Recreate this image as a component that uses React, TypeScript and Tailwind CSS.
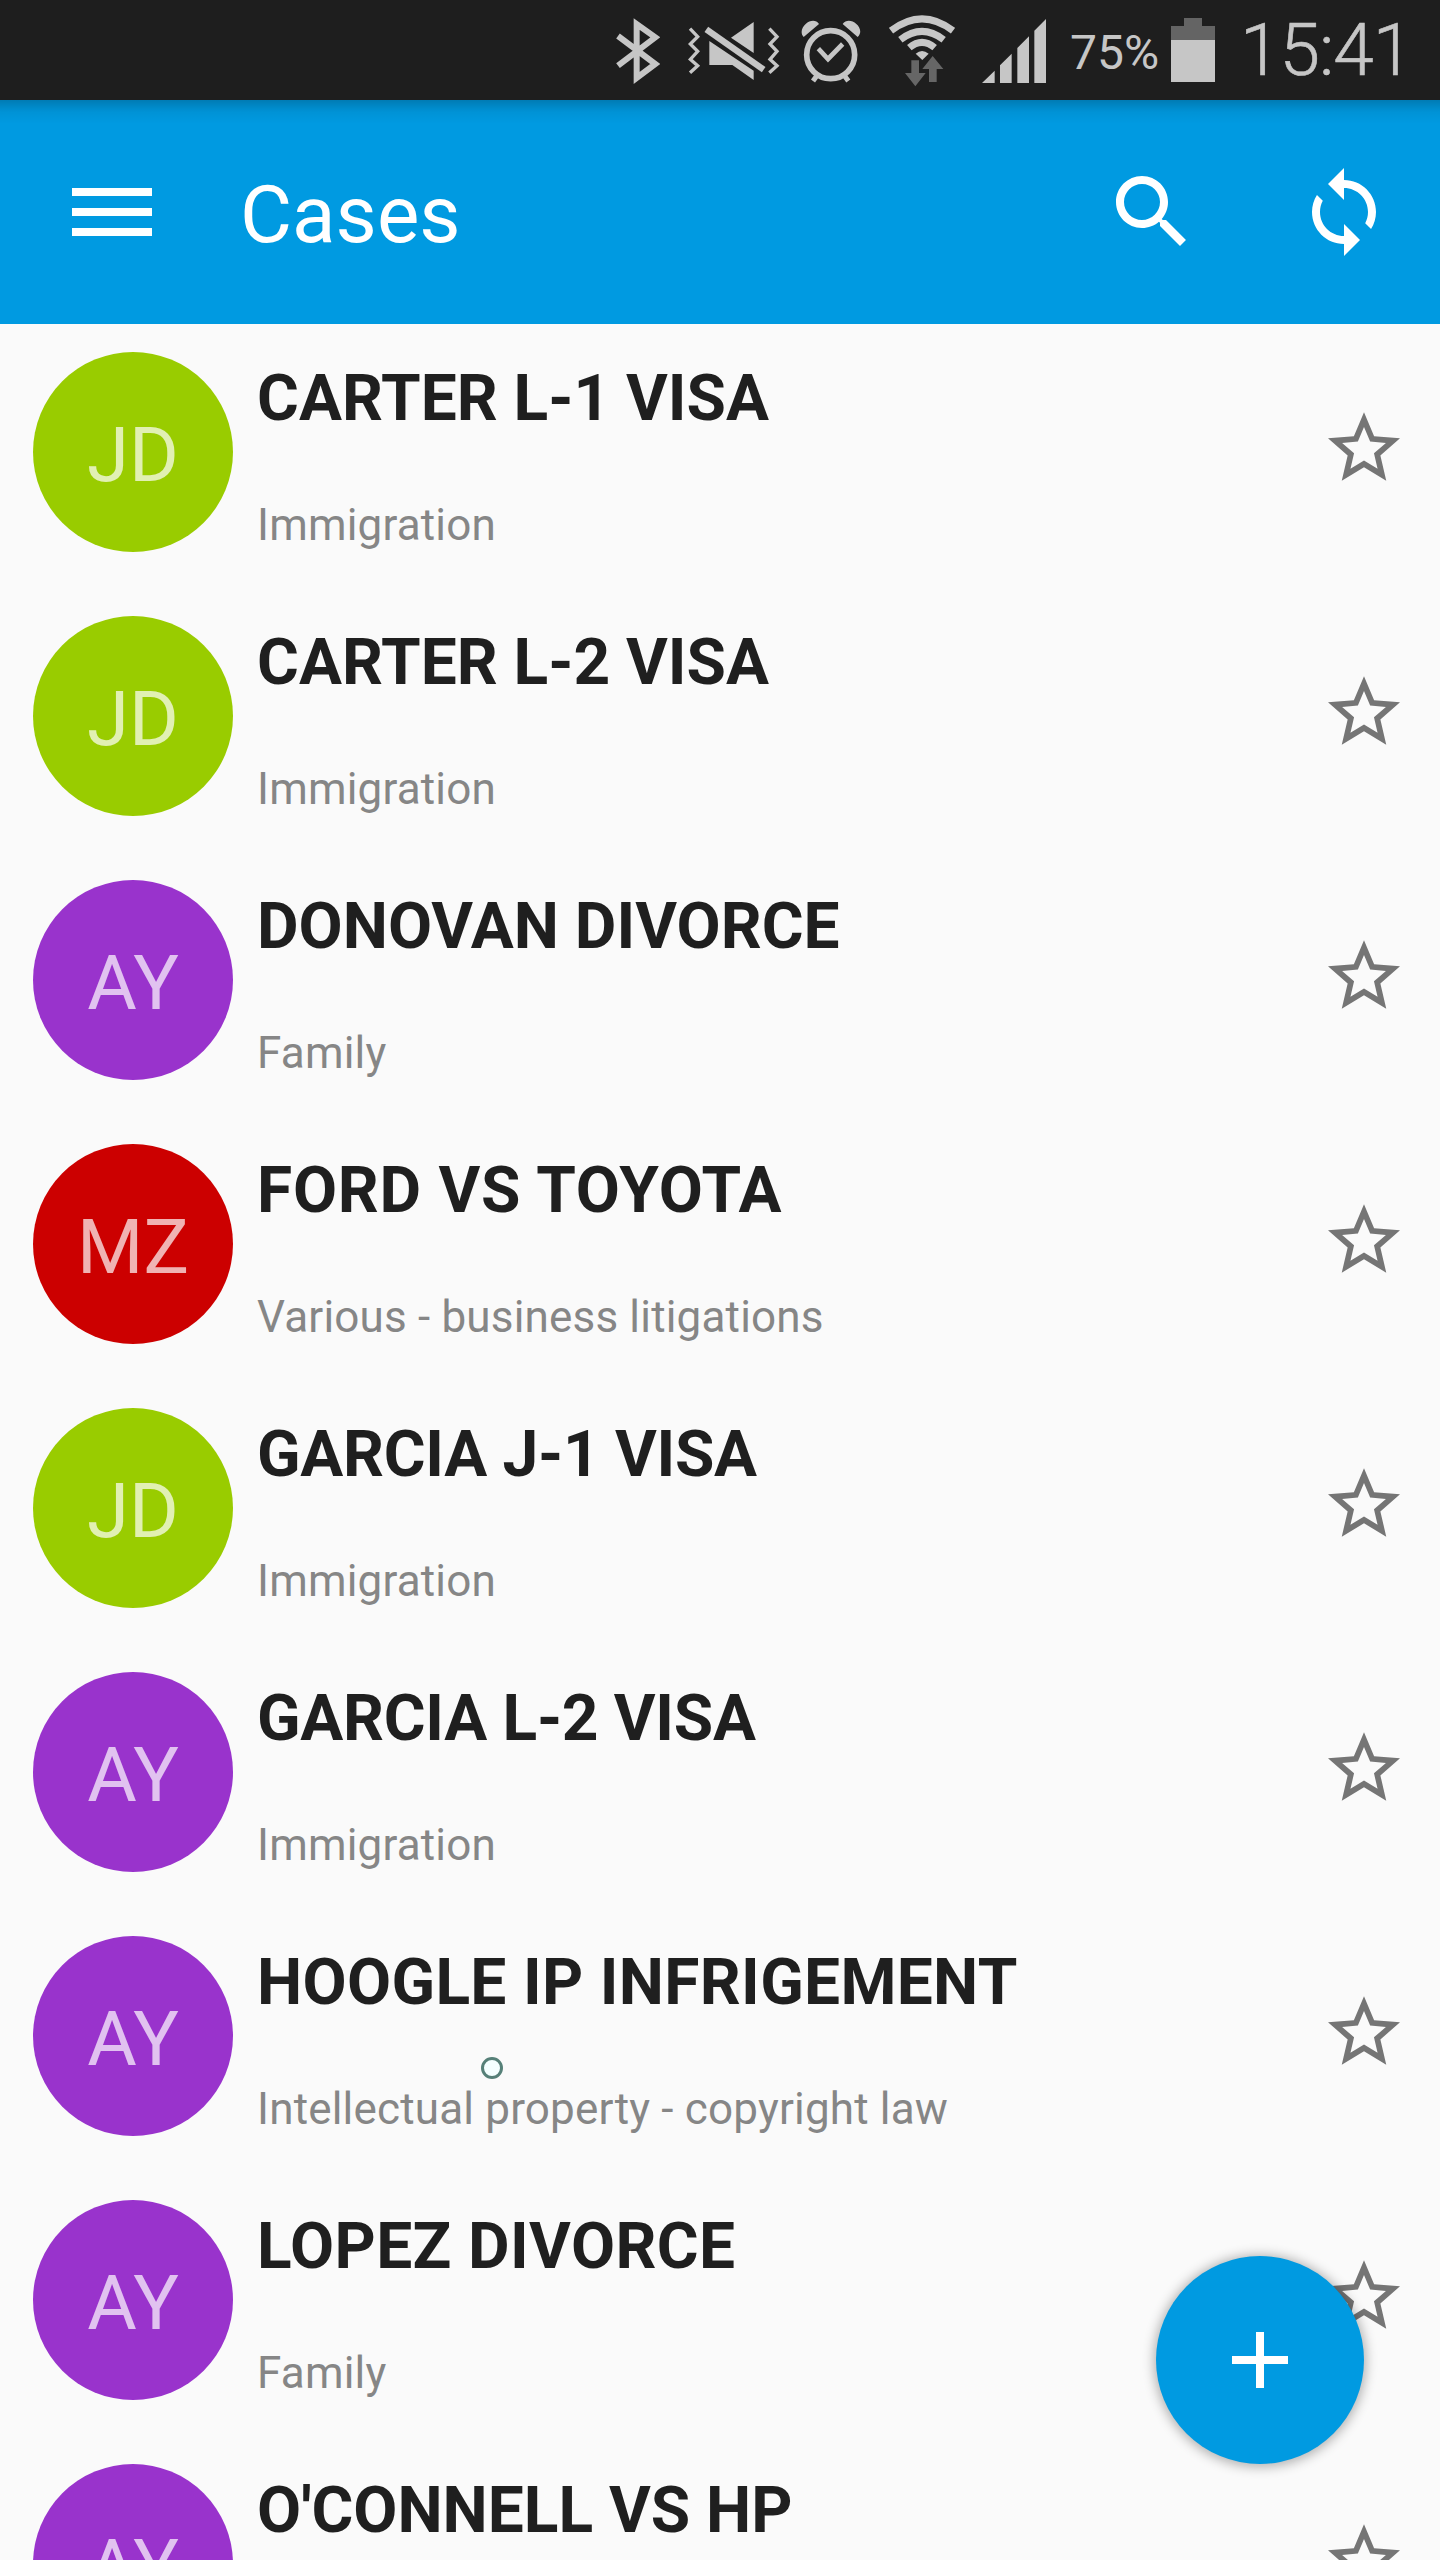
import clsx from 'clsx';

type Case = {
  initials: string;
  color: string;
  title: string;
  area: string;
  tracking?: string;
};

const cases: Case[] = [
  { initials: 'JD', color: 'bg-[#99cc00]', title: 'CARTER L-1 VISA', area: 'Immigration' },
  { initials: 'JD', color: 'bg-[#99cc00]', title: 'CARTER L-2 VISA', area: 'Immigration' },
  { initials: 'AY', color: 'bg-[#9933cc]', title: 'DONOVAN DIVORCE', area: 'Family' },
  { initials: 'MZ', color: 'bg-[#cc0000]', title: 'FORD VS TOYOTA', area: 'Various - business litigations', tracking: 'tracking-[0.75px]' },
  { initials: 'JD', color: 'bg-[#99cc00]', title: 'GARCIA J-1 VISA', area: 'Immigration', tracking: 'tracking-[-0.3px]' },
  { initials: 'AY', color: 'bg-[#9933cc]', title: 'GARCIA L-2 VISA', area: 'Immigration', tracking: 'tracking-[-0.3px]' },
  { initials: 'AY', color: 'bg-[#9933cc]', title: 'HOOGLE IP INFRIGEMENT', area: 'Intellectual property - copyright law', tracking: 'tracking-[0.33px]' },
  { initials: 'AY', color: 'bg-[#9933cc]', title: 'LOPEZ DIVORCE', area: 'Family', tracking: 'tracking-[0.38px]' },
  { initials: 'AY', color: 'bg-[#9933cc]', title: "O'CONNELL VS HP", area: '' },
];

function StatusBar() {
  return (
    <div className="h-[100px] bg-[#1e1e1e] flex items-start text-[#c6c6c6] pl-[616px] shrink-0 whitespace-nowrap">
      {/* bluetooth */}
      <svg className="w-[44px] h-[100px] shrink-0" viewBox="48 0 132 300" fill="none" stroke="currentColor" strokeWidth="18">
        <path d="M54 108L166 192L110 234V72L166 112L54 197" />
      </svg>

      {/* muted, vibrating */}
      <svg className="ml-[28px] w-[92px] h-[100px] shrink-0" viewBox="264 0 276 300" fill="currentColor">
        <path d="M270 86L293 110L271 132L293 154L271 178L293 197L270 218M508 86L531 110L510 132L531 154L510 178L531 197L508 218" fill="none" stroke="currentColor" strokeWidth="10" />
        <path d="M461 66V159L393 113ZM328 123L461 212V240L397 195H328Z" />
        <path d="M319 88L491 209" stroke="currentColor" strokeWidth="19" />
      </svg>

      {/* alarm */}
      <svg className="ml-[21px] w-[60px] h-[100px] shrink-0" viewBox="603 0 180 300" fill="none" stroke="currentColor">
        <circle cx="692" cy="164" r="72" strokeWidth="17" />
        <path d="M655 146L684 177L728 132" strokeWidth="14" />
        <path d="M650 228L639 243M734 228L745 243" strokeWidth="15" />
        <path d="M611 111C600 100 605 82 617 72C630 60 648 58 657 72ZM773 111C786 100 781 82 769 72C756 60 738 58 728 72Z" fill="currentColor" stroke="none" />
      </svg>

      {/* wifi with traffic arrows */}
      <svg className="ml-[28px] w-[66px] h-[100px] shrink-0" viewBox="867 0 198 300">
        <g fill="none" stroke="currentColor" strokeWidth="21">
          <path d="M873 92Q966 21 1059 92" />
          <path d="M901 119Q966 69 1031 119" />
          <path d="M928 143Q966 111 1004 143" />
        </g>
        <path d="M947 161Q966 145 986 161L967 180Z" fill="currentColor" />
        <path d="M934 181H957V219H977L946 259L915 219H934ZM987 246V207H967L998 168L1030 207H1010V246Z" fill="#666" />
      </svg>

      {/* signal */}
      <svg className="ml-[27px] w-[65px] h-[100px] shrink-0" viewBox="66 0 195 300" fill="currentColor">
        <path d="M66 249L104 212V249ZM120 249V196L155 161V249ZM172 249V144L207 109V249ZM223 249V92L258 57V249Z" />
      </svg>

      <span className="ml-[23px] w-[90px] pt-[21px] text-[48px] leading-[64px]">75%</span>

      {/* battery */}
      <svg className="ml-[11px] w-[44px] h-[100px] shrink-0" viewBox="633 0 132 300">
        <path d="M672 54H726V78H765V120H633V78H672Z" fill="#646464" />
        <path d="M633 120H765V246H633Z" fill="currentColor" />
      </svg>

      <span className="ml-[25px] pt-[10px] text-[73px] leading-[80px] font-light tracking-[-1px] [-webkit-text-stroke:0.6px]">15:41</span>
    </div>
  );
}

function AppBar() {
  return (
    <header className="relative h-[224px] bg-[#009ae1] flex items-center text-white shrink-0">
      <div className="absolute inset-x-0 top-0 h-[24px] bg-linear-to-b from-black/20 via-black/5 to-transparent" />
      <div className="ml-[72px] w-[80px] flex flex-col gap-[12px]">
        <span className="h-[8px] bg-white" />
        <span className="h-[8px] bg-white" />
        <span className="h-[8px] bg-white" />
      </div>
      <h1 className="ml-[88px] mt-[6px] text-[80px] leading-[96px] font-normal">Cases</h1>
      <svg className="ml-auto w-[96px] h-[96px]" viewBox="0 0 24 24" fill="currentColor">
        <path d="M15.5 14h-.79l-.28-.27C15.41 12.59 16 11.11 16 9.5 16 5.91 13.09 3 9.5 3S3 5.91 3 9.5 5.91 16 9.5 16c1.61 0 3.09-.59 4.23-1.57l.27.28v.79l5 4.99L20.49 19l-4.99-5zm-6 0C7.01 14 5 11.99 5 9.5S7.01 5 9.5 5 14 7.01 14 9.5 11.99 14 9.5 14z" />
      </svg>
      <svg className="ml-[96px] mr-[48px] w-[96px] h-[96px]" viewBox="0 0 24 24" fill="currentColor">
        <path d="M12 4V1L8 5l4 4V6c3.31 0 6 2.69 6 6 0 1.01-.25 1.97-.7 2.8l1.46 1.46C19.54 15.03 20 13.57 20 12c0-4.42-3.58-8-8-8zm0 14c-3.31 0-6-2.69-6-6 0-1.01.25-1.97.7-2.8L5.24 7.74C4.46 8.97 4 10.43 4 12c0 4.42 3.58 8 8 8v3l4-4-4-4v3z" />
      </svg>
    </header>
  );
}

function CaseRow({ item }: { item: Case }) {
  return (
    <li className="h-[264px] pt-[28px] pl-[33px] pr-[40px] flex items-start shrink-0">
      <div className={clsx('w-[200px] h-[200px] rounded-full flex items-center justify-center shrink-0', item.color)}>
        <span className="mt-[5px] text-[76px] leading-[88px] text-white/70">{item.initials}</span>
      </div>
      <div className="ml-[24px] flex-1 whitespace-nowrap">
        <h2 className={clsx('mt-[9px] text-[64px] leading-[76px] font-bold text-[#1f1f1f]', item.tracking)}>{item.title}</h2>
        {item.area && (
          <p className="mt-[62px] text-[44px] leading-[52px] tracking-[0.18px] text-[#868686]">{item.area}</p>
        )}
      </div>
      <svg className="mt-[60px] w-[72px] h-[69px] shrink-0 text-[#757575]" viewBox="2 2 20 19" fill="currentColor">
        <path d="M22 9.24l-7.19-.62L12 2 9.19 8.63 2 9.24l5.46 4.73L5.82 21 12 17.27 18.18 21l-1.63-7.03L22 9.24zM12 15.4l-3.76 2.27 1-4.28-3.32-2.88 4.38-.38L12 6.1l1.71 4.04 4.38.38-3.32 2.88 1 4.28L12 15.4z" />
      </svg>
    </li>
  );
}

export default function App() {
  return (
    <div className="relative w-[1440px] h-[2560px] overflow-hidden bg-[#fafafa] flex flex-col font-['Roboto',sans-serif]">
      <StatusBar />
      <AppBar />
      <ul className="flex flex-col">
        {cases.map((item) => (
          <CaseRow key={item.title} item={item} />
        ))}
      </ul>

      {/* pointer */}
      <div className="absolute left-[481px] top-[2057px] w-[22px] h-[22px] rounded-full border-3 border-[#568078] bg-[#f4ffff]" />

      <button className="absolute left-[1156px] top-[2256px] w-[208px] h-[208px] rounded-full bg-[#009ae1] flex items-center justify-center shadow-[0_1px_12px_2px_rgba(0,0,0,0.3)]">
        <svg className="w-[56px] h-[56px]" viewBox="0 0 56 56" fill="none" stroke="#fff" strokeWidth="8">
          <path d="M28 0V56M0 28H56" />
        </svg>
      </button>
    </div>
  );
}
